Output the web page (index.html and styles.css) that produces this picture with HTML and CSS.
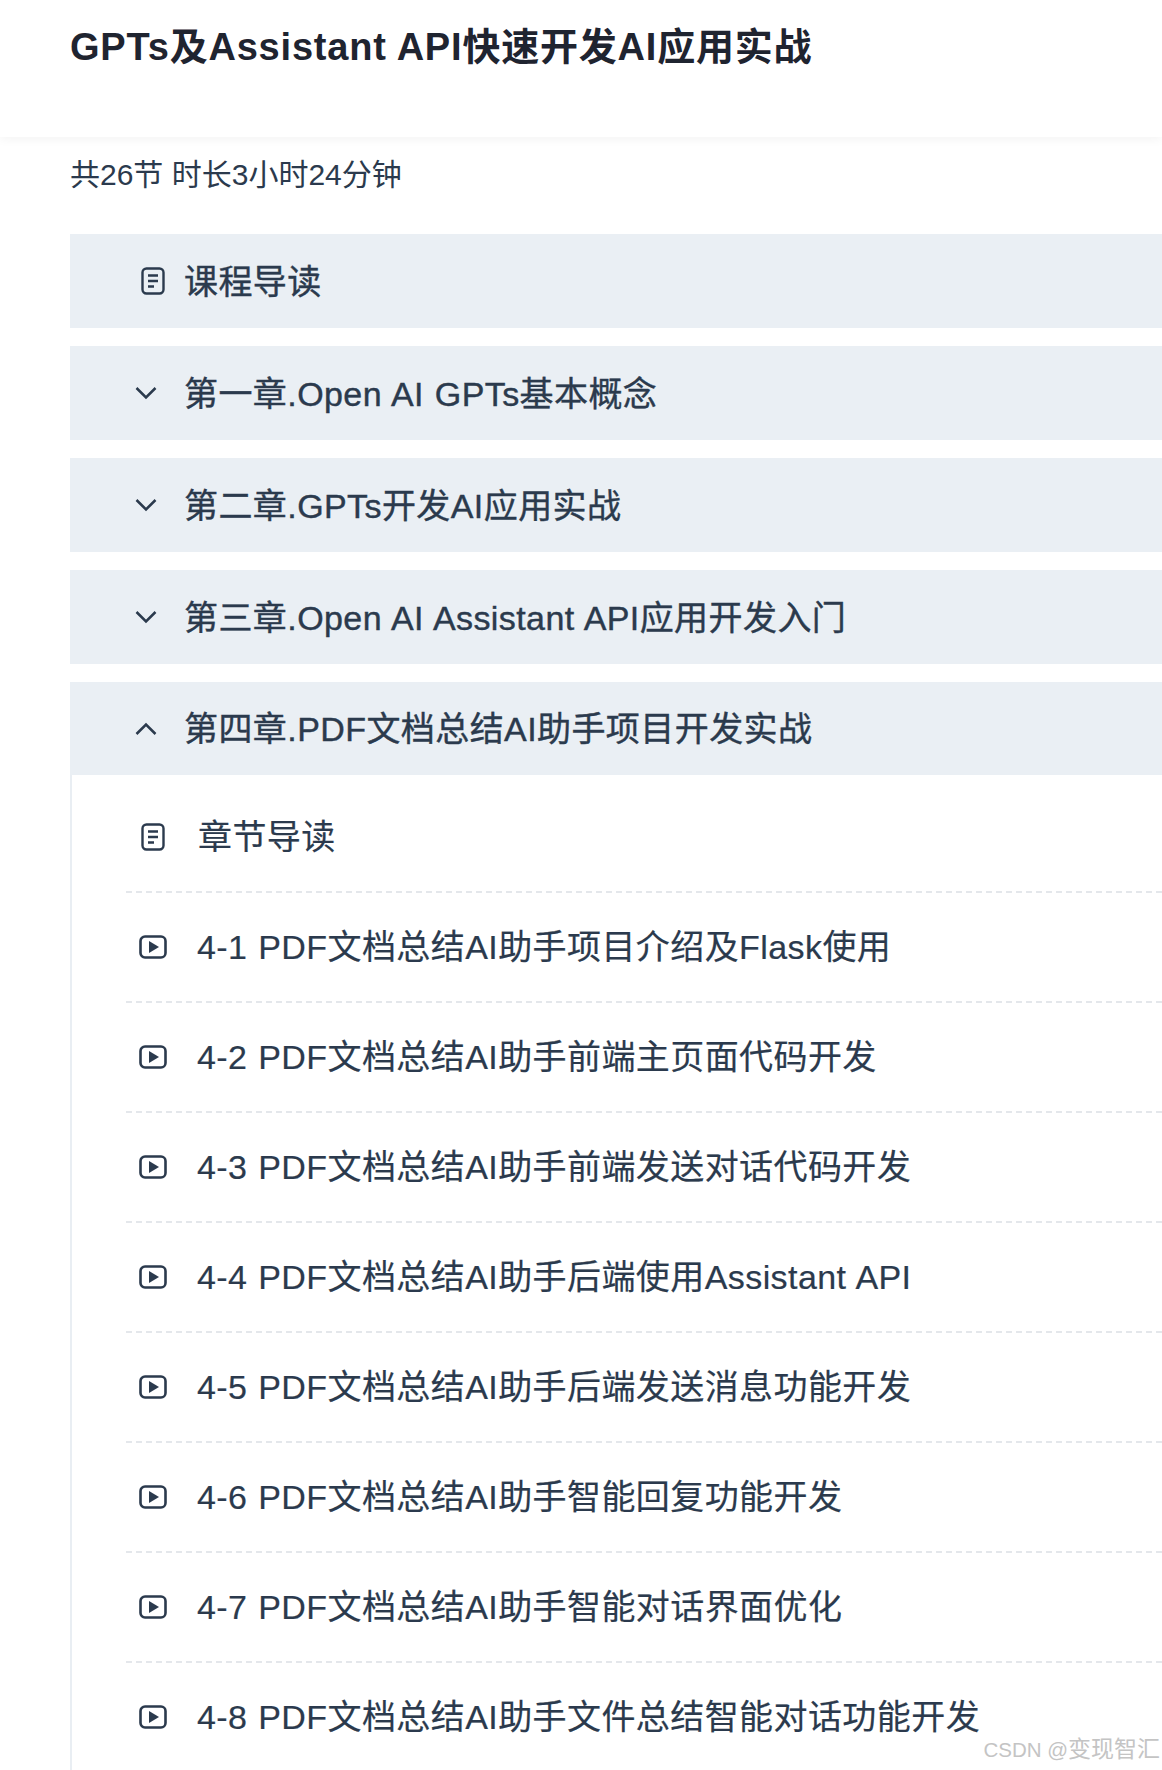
FILE: index.html
```html
<!DOCTYPE html>
<html lang="zh-CN">
<head>
    <meta charset="UTF-8">
    <title>GPTs及Assistant API快速开发AI应用实战</title>
    <link rel="stylesheet" href="styles.css">
</head>
<body>
    <svg class="icon-defs" width="0" height="0">
        <symbol id="icon-doc" viewBox="0 0 24 28">
            <rect x="1.5" y="1.5" width="21" height="25" rx="4" fill="none" stroke="currentColor" stroke-width="2.4"/>
            <path d="M7 8.5h10M7 14h10M7 19.5h6" fill="none" stroke="currentColor" stroke-width="2.4"/>
        </symbol>
        <symbol id="icon-play" viewBox="0 0 28 24">
            <rect x="1.5" y="1.5" width="25" height="21" rx="4.5" fill="none" stroke="currentColor" stroke-width="2.6"/>
            <path d="M10 6v12l10-6z" fill="currentColor"/>
        </symbol>
        <symbol id="icon-down" viewBox="0 0 22 14">
            <path d="M1.5 2l9.5 9.5L20.500 2" fill="none" stroke="currentColor" stroke-width="2.5"/>
        </symbol>
        <symbol id="icon-up" viewBox="0 0 22 14">
            <path d="M1.500 12L11 2.500l9.500 9.500" fill="none" stroke="currentColor" stroke-width="2.5"/>
        </symbol>
    </svg>

    <header class="page-header">
        <h1>GPTs及Assistant API快速开发AI应用实战</h1>
    </header>

    <main class="course">
        <p class="course-meta">共26节 时长3小时24分钟</p>

        <section class="chapter">
            <div class="chapter-head">
                <svg class="icon-doc"><use href="#icon-doc"/></svg>
                <span class="chapter-title">课程导读</span>
            </div>
        </section>

        <section class="chapter">
            <div class="chapter-head">
                <svg class="icon-chevron"><use href="#icon-down"/></svg>
                <span class="chapter-title">第一章.Open AI GPTs基本概念</span>
            </div>
        </section>

        <section class="chapter">
            <div class="chapter-head">
                <svg class="icon-chevron"><use href="#icon-down"/></svg>
                <span class="chapter-title">第二章.GPTs开发AI应用实战</span>
            </div>
        </section>

        <section class="chapter">
            <div class="chapter-head">
                <svg class="icon-chevron"><use href="#icon-down"/></svg>
                <span class="chapter-title">第三章.Open AI Assistant API应用开发入门</span>
            </div>
        </section>

        <section class="chapter">
            <div class="chapter-head chapter-head-open">
                <svg class="icon-chevron"><use href="#icon-up"/></svg>
                <span class="chapter-title">第四章.PDF文档总结AI助手项目开发实战</span>
            </div>
            <ul class="lessons">
                <li class="lesson">
                    <svg class="icon-doc"><use href="#icon-doc"/></svg>
                    <span class="lesson-title">章节导读</span>
                </li>
                <li class="lesson">
                    <svg class="icon-play"><use href="#icon-play"/></svg>
                    <span class="lesson-title">4-1 PDF文档总结AI助手项目介绍及Flask使用</span>
                </li>
                <li class="lesson">
                    <svg class="icon-play"><use href="#icon-play"/></svg>
                    <span class="lesson-title">4-2 PDF文档总结AI助手前端主页面代码开发</span>
                </li>
                <li class="lesson">
                    <svg class="icon-play"><use href="#icon-play"/></svg>
                    <span class="lesson-title">4-3 PDF文档总结AI助手前端发送对话代码开发</span>
                </li>
                <li class="lesson">
                    <svg class="icon-play"><use href="#icon-play"/></svg>
                    <span class="lesson-title">4-4 PDF文档总结AI助手后端使用Assistant API</span>
                </li>
                <li class="lesson">
                    <svg class="icon-play"><use href="#icon-play"/></svg>
                    <span class="lesson-title">4-5 PDF文档总结AI助手后端发送消息功能开发</span>
                </li>
                <li class="lesson">
                    <svg class="icon-play"><use href="#icon-play"/></svg>
                    <span class="lesson-title">4-6 PDF文档总结AI助手智能回复功能开发</span>
                </li>
                <li class="lesson">
                    <svg class="icon-play"><use href="#icon-play"/></svg>
                    <span class="lesson-title">4-7 PDF文档总结AI助手智能对话界面优化</span>
                </li>
                <li class="lesson">
                    <svg class="icon-play"><use href="#icon-play"/></svg>
                    <span class="lesson-title">4-8 PDF文档总结AI助手文件总结智能对话功能开发</span>
                </li>
            </ul>
        </section>
    </main>

    <div class="watermark"><span class="watermark-latin">CSDN @</span>变现智汇</div>
</body>
</html>
```

FILE: styles.css
```css
html, body {
    height: 100%;
}

body {
    position: relative;
    margin: 0;
    overflow: hidden;
    background-color: #fff;
    color: #2b3a4d;
    font-family: "Liberation Sans", "Noto Sans CJK SC", sans-serif;
}

.icon-defs {
    position: absolute;
}

.page-header {
    height: 137px;
    padding-left: 70px;
    background-color: #fff;
    box-shadow: 0 2px 10px rgba(0, 0, 0, 0.05);
}

h1 {
    margin: 0;
    padding-top: 23px;
    color: #1f2430;
    font-size: 38px;
    font-weight: bold;
    line-height: 48px;
    letter-spacing: 0.8px;
}

.course {
    padding-left: 70px;
}

.course-meta {
    margin: 0;
    padding-top: 18px;
    font-size: 30px;
    line-height: 40px;
}

.chapter {
    margin-top: 18px;
}

.course-meta + .chapter {
    margin-top: 39px;
}

.chapter-head {
    display: flex;
    align-items: center;
    height: 94px;
    background-color: #eaeff4;
}

.chapter-head-open {
    height: 93px;
}

.chapter-title {
    margin-bottom: 4px;
    font-size: 34px;
    letter-spacing: 0.42px;
    word-spacing: 1px;
    white-space: nowrap;
    -webkit-text-stroke: 0.4px #2b3a4d;
}

.icon-doc {
    flex: none;
    width: 24px;
    height: 28px;
    margin-left: 71px;
    margin-right: 19px;
}

.icon-chevron {
    flex: none;
    width: 22px;
    height: 14px;
    margin-left: 65px;
    margin-right: 27px;
}

.lessons {
    margin: 0;
    padding: 8px 0 0 54px;
    border-left: 2px solid #e9eef3;
    list-style: none;
}

.lesson {
    display: flex;
    align-items: center;
    height: 108px;
    border-bottom: 2px dashed #e4e7eb;
}

.lesson-title {
    margin-bottom: 5px;
    font-size: 34px;
    letter-spacing: 0.42px;
    word-spacing: 1px;
    white-space: nowrap;
    -webkit-text-stroke: 0.2px #2b3a4d;
}

.lesson .icon-doc {
    margin-left: 15px;
    margin-right: 33px;
}

.icon-play {
    flex: none;
    width: 28px;
    height: 24px;
    margin-left: 13px;
    margin-right: 30px;
}

.watermark {
    position: absolute;
    right: 2px;
    bottom: 6px;
    color: #c4c4c4;
    font-size: 23px;
    white-space: nowrap;
}

.watermark-latin {
    font-size: 20.5px;
}
```
